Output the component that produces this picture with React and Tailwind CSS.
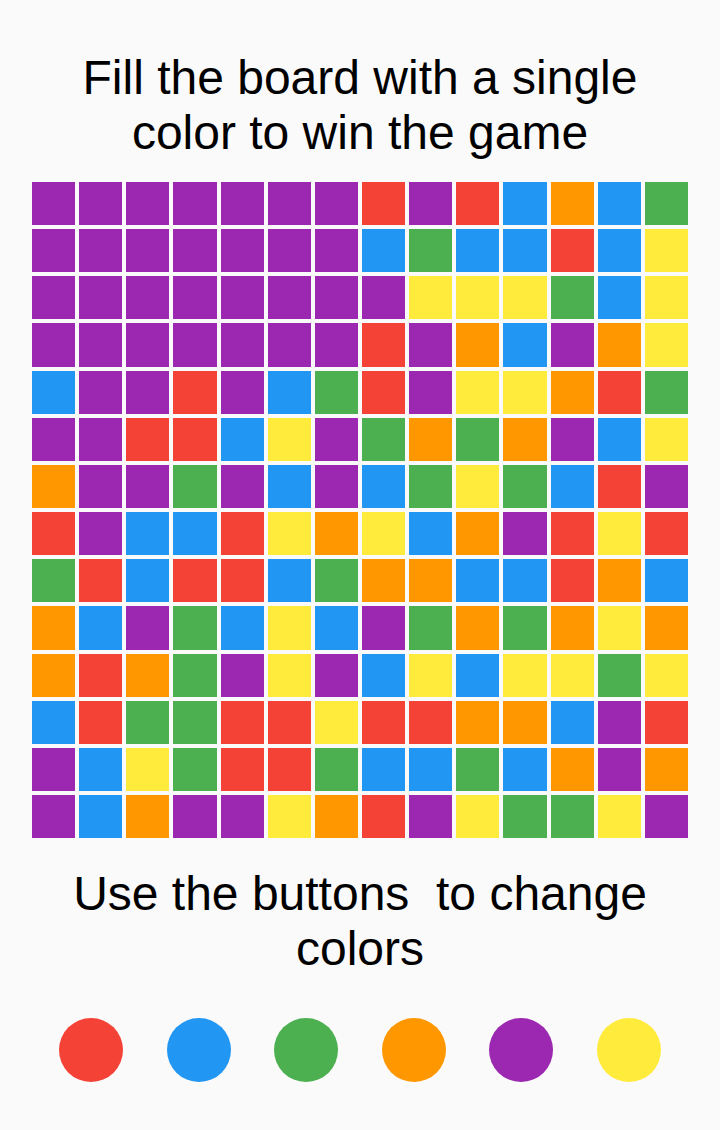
import React from "react";

const C = {
  P: "bg-[#9C27B0]",
  R: "bg-[#F44336]",
  B: "bg-[#2196F3]",
  G: "bg-[#4CAF50]",
  O: "bg-[#FF9800]",
  Y: "bg-[#FFEB3B]",
};

const ROWS = [
  "PPPPPPPRPRBOBG",
  "PPPPPPPBGBBRBY",
  "PPPPPPPPYYYGBY",
  "PPPPPPPRPOBPOY",
  "BPPRPBGRPYYORG",
  "PPRRBYPGOGOPBY",
  "OPPGPBPBGYGBRP",
  "RPBBRYOYBOPRYR",
  "GRBRRBGOOBBROB",
  "OBPGBYBPGOGOYO",
  "OROGPYPBYBYYGY",
  "BRGGRRYRROOBPR",
  "PBYGRRGBBGBOPO",
  "PBOPPYORPYGGYP",
];

const BUTTONS = ["R", "B", "G", "O", "P", "Y"];

export default function App() {
  return (
    <div
      className="min-h-screen bg-[#FAFAFA] text-black pt-[50px]"
      style={{ fontFamily: '"Liberation Sans", Arial, sans-serif' }}
    >
      <h1 className="w-[660px] mx-auto text-center text-[48px] leading-[55px] font-normal">
        Fill the board with a single color to win the game
      </h1>
      <div className="w-[660px] mx-auto mt-[20px] grid grid-cols-[repeat(14,minmax(0,1fr))]">
        {ROWS.flatMap((row, r) =>
          row.split("").map((c, i) => (
            <div key={`${r}-${i}`} className={`m-[2px] aspect-square ${C[c]}`} />
          ))
        )}
      </div>
      <p className="w-[660px] mx-auto mt-[26px] text-center text-[48px] leading-[55px] whitespace-pre-wrap">
        {"Use the buttons  to change colors"}
      </p>
      <div className="w-[645px] mx-auto mt-[42px] flex">
        {BUTTONS.map((c) => (
          <div key={c} className="flex-1 flex justify-center">
            <button className={`w-16 h-16 rounded-full ${C[c]}`} />
          </div>
        ))}
      </div>
    </div>
  );
}
